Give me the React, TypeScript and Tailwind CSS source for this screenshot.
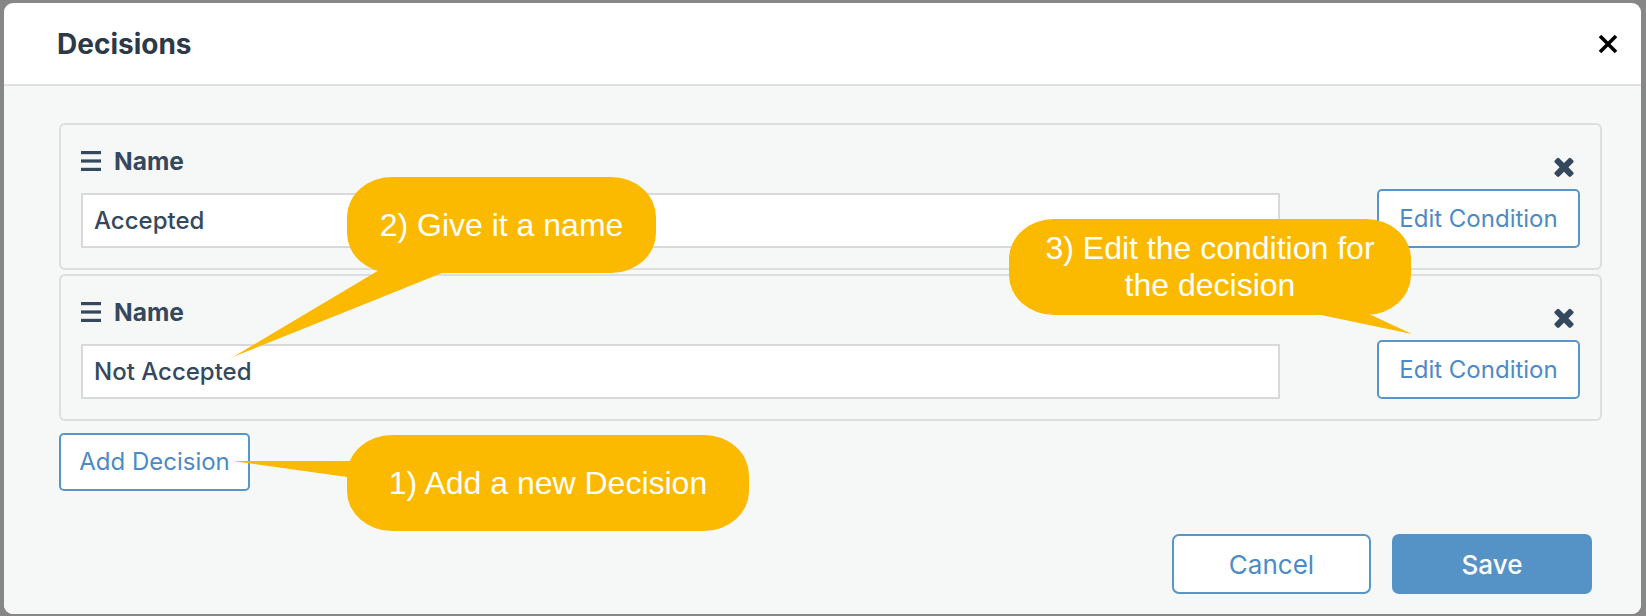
import React from "react";

const UI = { fontFamily: "Inter, 'Noto Sans', Roboto, sans-serif" };
const CALLOUT = { fontFamily: "'Liberation Sans', Arial, sans-serif" };

function Bars() {
  return (
    <svg width="20" height="20" viewBox="0 0 20 20" className="shrink-0">
      <rect x="0" y="0" width="20" height="3.2" fill="#34495e" />
      <rect x="0" y="8.4" width="20" height="3.2" fill="#34495e" />
      <rect x="0" y="16.8" width="20" height="3.2" fill="#34495e" />
    </svg>
  );
}

function FaTimes() {
  return (
    <svg width="20" height="20" viewBox="110 214 1188 1232" className="shrink-0">
      <path
        fill="#34495e"
        d="M1298 1214q0 40-28 68l-136 136q-28 28-68 28t-68-28l-294-294-294 294q-28 28-68 28t-68-28l-136-136q-28-28-28-68t28-68l294-294-294-294q-28-28-28-68t28-68l136-136q28-28 68-28t68 28l294 294 294-294q28-28 68-28t68 28l136 136q28 28 28 68t-28 68l-294 294 294 294q28 28 28 68z"
      />
    </svg>
  );
}

function CloseX() {
  return (
    <svg width="20" height="20" viewBox="0 0 20 20">
      <path d="M2 2 L18 18 M18 2 L2 18" stroke="#000" strokeWidth="3.6" strokeLinecap="butt" />
    </svg>
  );
}

function DecisionCard({ value }: { value: string }) {
  return (
    <div className="flex h-[147px] items-end gap-[97px] rounded-[6px] border-2 border-[#dcdedf] px-[20px] pb-[20px] pt-[22px]">
      <div className="flex min-w-0 flex-1 flex-col">
        <div className="flex h-[28px] items-center gap-[13px]">
          <Bars />
          <span className="text-[24.5px] font-bold leading-none text-[#34495e]">Name</span>
        </div>
        <input
          readOnly
          value={value}
          className="mt-[18px] h-[55px] w-full border-2 border-[#d8d9da] bg-white px-[11px] text-[24px] font-medium text-[#34495e] outline-none"
          style={UI}
        />
      </div>
      <div className="flex w-[203px] shrink-0 flex-col items-end">
        <div className="mb-[12px] mr-[6px]">
          <FaTimes />
        </div>
        <button className="h-[59px] w-[203px] rounded-[5px] border-2 border-[#5a95c8] bg-white text-[24px] text-[#4c8bc4]">
          Edit Condition
        </button>
      </div>
    </div>
  );
}

export default function App() {
  return (
    <div
      className="relative h-[616px] w-[1646px] overflow-hidden bg-[#878787] pb-[2px] pl-[4px] pr-[5px] pt-[3px]"
      style={UI}
    >
      <div className="flex h-full flex-col overflow-hidden rounded-[9px] bg-white">
        <div className="flex h-[83px] shrink-0 items-center justify-between border-b-2 border-[#dfe1e2] pl-[53px] pr-[23px]">
          <h2 className="text-[28px] font-bold text-[#2c3a47]">Decisions</h2>
          <CloseX />
        </div>
        <div className="flex flex-1 flex-col bg-[#f6f8f8] pl-[55px] pr-[39px] pt-[37px]">
          <div className="flex flex-col gap-[4px]">
            <DecisionCard value="Accepted" />
            <DecisionCard value="Not Accepted" />
          </div>
          <button className="mt-[12px] h-[58px] w-[191px] self-start rounded-[5px] border-2 border-[#5a95c8] bg-white text-[24px] text-[#4c8bc4]">
            Add Decision
          </button>
          <div className="mt-[43px] flex justify-end gap-[21px] pr-[10px]">
            <button className="h-[60px] w-[199px] rounded-[7px] border-2 border-[#5a95c8] bg-white text-[26px] text-[#4c8bc4]">
              Cancel
            </button>
            <button className="h-[60px] w-[200px] rounded-[7px] bg-[#5593c7] text-[26px] font-medium text-white">
              Save
            </button>
          </div>
        </div>
      </div>

      {/* Callout tails */}
      <svg className="pointer-events-none absolute left-0 top-0" width="1646" height="616">
        <polygon points="232,461 400,461 400,484 347,477" fill="#fbba00" />
        <polygon points="233,357 396,260 450,260 442,273" fill="#fbba00" />
        <polygon points="1412,334 1321,315 1321,300 1369,300 1369,314" fill="#fbba00" />
      </svg>

      {/* Callout bubbles */}
      <div
        className="absolute left-[347px] top-[177px] flex h-[96px] w-[309px] items-center justify-center rounded-[45px/40px] bg-[#fbba00] text-[32px] leading-none text-white"
        style={CALLOUT}
      >
        2) Give it a name
      </div>
      <div
        className="absolute left-[1009px] top-[219px] flex h-[96px] w-[402px] items-center justify-center rounded-[45px/40px] bg-[#fbba00] text-center text-[32px] leading-[37px] text-white"
        style={CALLOUT}
      >
        <span>
          3) Edit the condition for
          <br />
          the decision
        </span>
      </div>
      <div
        className="absolute left-[347px] top-[435px] flex h-[96px] w-[402px] items-center justify-center rounded-[45px/40px] bg-[#fbba00] text-[32px] leading-none text-white"
        style={CALLOUT}
      >
        1) Add a new Decision
      </div>
    </div>
  );
}
